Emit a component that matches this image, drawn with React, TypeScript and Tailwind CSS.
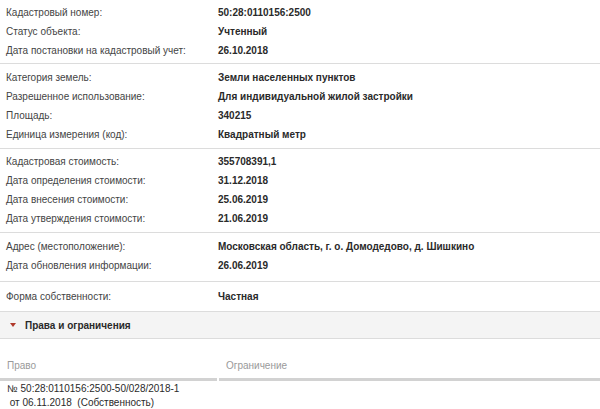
const groups: [string, string][][] = [
  [
    ["Кадастровый номер:", "50:28:0110156:2500"],
    ["Статус объекта:", "Учтенный"],
    ["Дата постановки на кадастровый учет:", "26.10.2018"],
  ],
  [
    ["Категория земель:", "Земли населенных пунктов"],
    ["Разрешенное использование:", "Для индивидуальной жилой застройки"],
    ["Площадь:", "340215"],
    ["Единица измерения (код):", "Квадратный метр"],
  ],
  [
    ["Кадастровая стоимость:", "355708391,1"],
    ["Дата определения стоимости:", "31.12.2018"],
    ["Дата внесения стоимости:", "25.06.2019"],
    ["Дата утверждения стоимости:", "21.06.2019"],
  ],
  [
    ["Адрес (местоположение):", "Московская область, г. о. Домодедово, д. Шишкино"],
    ["Дата обновления информации:", "26.06.2019"],
  ],
  [["Форма собственности:", "Частная"]],
];

const pads = ["pt-[3px] pb-[3px]", "py-[4px]", "pt-[3px] pb-[4px]", "pt-[4px] pb-[6px]", "pt-[5px] pb-[5px]"];

export default function App() {
  return (
    <div className="w-[600px] h-[409px] overflow-hidden bg-white text-[10px] font-['Liberation_Sans',Arial,sans-serif]">
      {groups.map((rows, gi) => (
        <div key={gi} className={`border-b border-[#dcdcdc] ${pads[gi]}`}>
          {rows.map(([label, value]) => (
            <div key={label} className="flex h-[19px] items-center">
              <div className="w-[218px] shrink-0 pl-[6px] text-[#444]">{label}</div>
              <div className="font-bold text-[#2a2a2a]">{value}</div>
            </div>
          ))}
        </div>
      ))}

      <div className="flex h-[27px] items-center gap-[9px] border-b border-[#dcdcdc] bg-[#f4f4f4] pl-[10px]">
        <svg width="6" height="4" viewBox="0 0 6 4">
          <path d="M0 0 H6 L3 4 Z" fill="#b0392b" />
        </svg>
        <span className="font-bold text-[#2a2a2a]">Права и ограничения</span>
      </div>

      <div className="flex h-[42px] items-end text-[#9a9a9a]">
        <div className="w-[217px] border-b-[3px] border-[#d2d2d2] pb-[5px] pl-[7px]">Право</div>
        <div className="ml-[2px] flex-1 border-b-[3px] border-[#d2d2d2] pb-[5px] pl-[7px]">Ограничение</div>
      </div>

      <div className="border-b border-[#dcdcdc] pt-[1px] pb-[1px] pl-[7px] leading-[14px] text-[#2a2a2a]">
        <div>№ 50:28:0110156:2500-50/028/2018-1</div>
        <div className="whitespace-pre"> от 06.11.2018  (Собственность)</div>
      </div>
    </div>
  );
}
